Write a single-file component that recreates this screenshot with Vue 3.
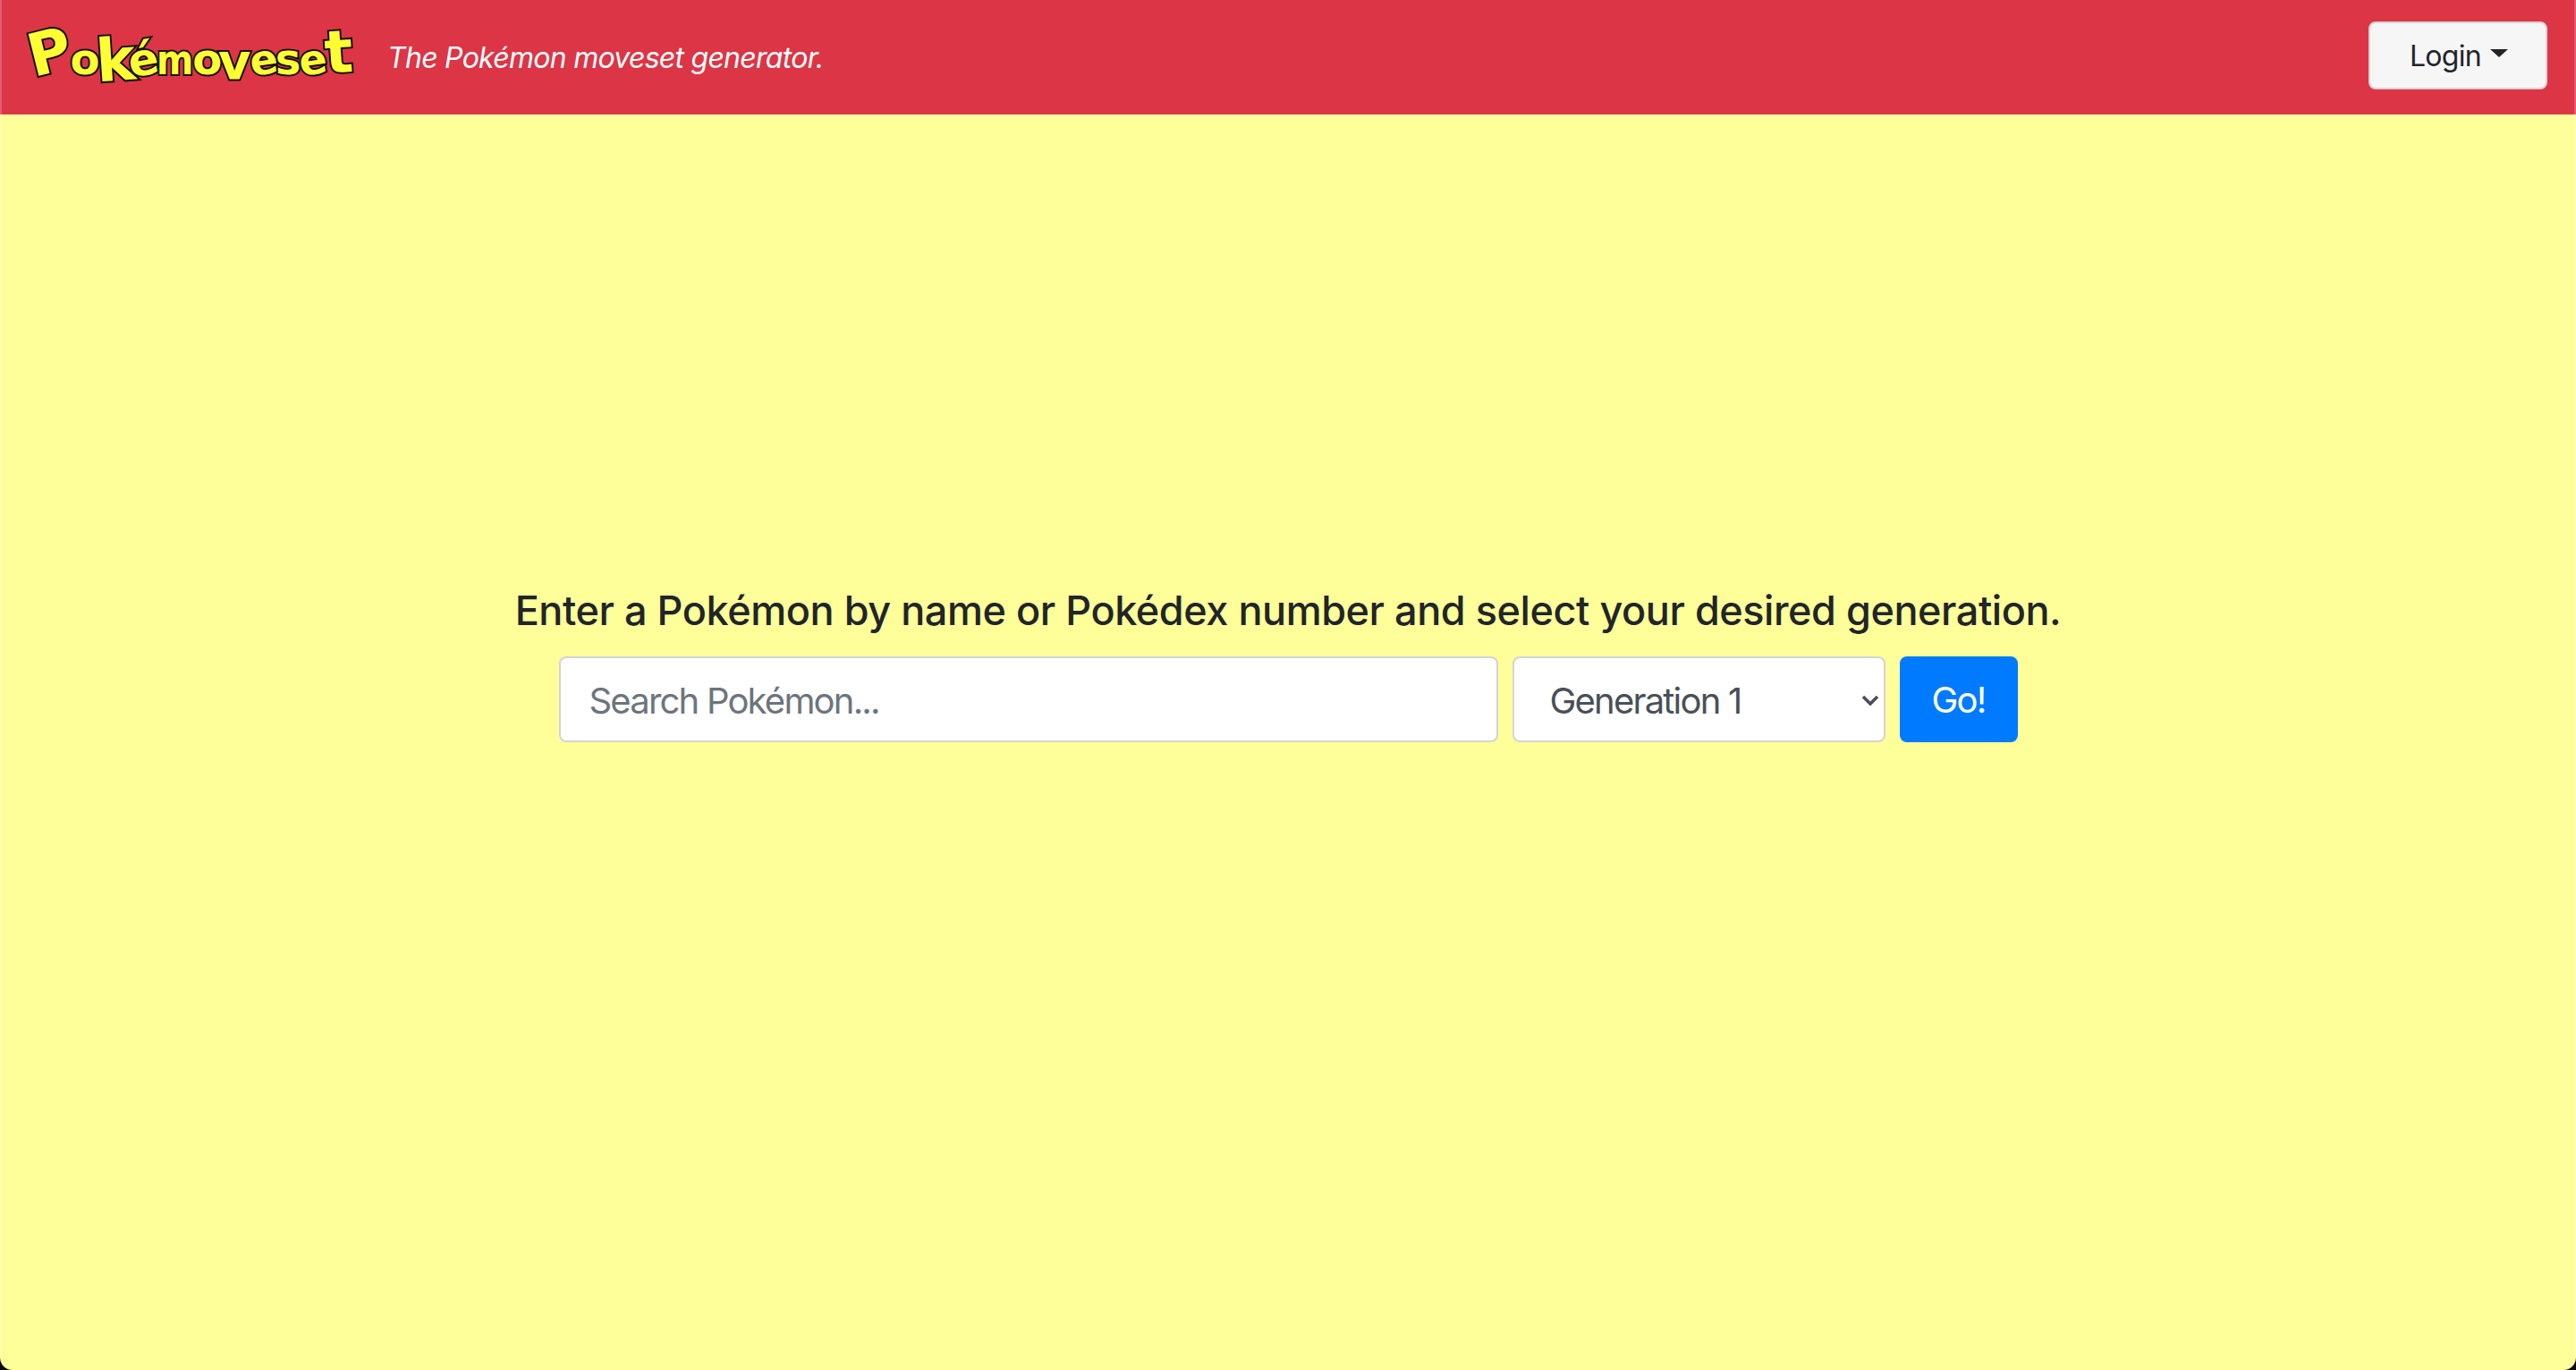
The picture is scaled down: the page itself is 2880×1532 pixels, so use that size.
<script setup>
import { ref } from 'vue'

const search = ref('')
const generation = ref(1)
const generations = [1, 2, 3, 4, 5, 6, 7, 8]
const logoLetters = [
  { ch: 'P', cls: 'l-p' },
  { ch: 'o', cls: 'l-o' },
  { ch: 'k', cls: 'l-k' },
  { ch: 'é', cls: 'l-e' },
  { ch: 'm', cls: 'l-m' },
  { ch: 'o', cls: 'l-o2' },
  { ch: 'v', cls: 'l-v' },
  { ch: 'e', cls: 'l-e2' },
  { ch: 's', cls: 'l-s' },
  { ch: 'e', cls: 'l-e3' },
  { ch: 't', cls: 'l-t' }
]
</script>

<template>
  <div class="page">
    <nav class="navbar">
      <div class="brand">
        <a class="logo" aria-label="Pokémoveset">
          <span v-for="(l, i) in logoLetters" :key="i" :class="['logo-letter', l.cls]">{{ l.ch }}</span>
        </a>
        <span class="tagline">The Pokémon moveset generator.</span>
      </div>
      <button class="login-btn" type="button">Login<span class="caret"></span></button>
    </nav>

    <main class="main">
      <h1 class="title">Enter a Pokémon by name or Pokédex number and select your desired generation.</h1>
      <form class="search-form" @submit.prevent>
        <input v-model="search" class="field search-input" type="text" placeholder="Search Pokémon..." />
        <div class="select-wrap">
          <select v-model="generation" class="field gen-select">
            <option v-for="g in generations" :key="g" :value="g">Generation {{ g }}</option>
          </select>
          <svg class="chevron" width="20" height="12" viewBox="0 0 20 12" aria-hidden="true">
            <path d="M2 2 L10 10 L18 2" fill="none" stroke="#495057" stroke-width="3.6" />
          </svg>
        </div>
        <button class="go-btn" type="submit">Go!</button>
      </form>
    </main>
  </div>
</template>

<style>
html,
body {
  margin: 0;
  background: #0c0c0c;
}
</style>

<style scoped>
.page {
  position: relative;
  height: 1532px;
  overflow: hidden;
  background: #ffff99;
  border-radius: 0 0 14px 14px;
  font-family: Inter, "Liberation Sans", sans-serif;
  color: #212529;
}

/* light window edge on both sides */
.page::after {
  content: "";
  position: absolute;
  top: 0;
  bottom: 0;
  left: 0;
  right: 0;
  border-left: 2px solid rgba(255, 255, 255, 0.2);
  border-right: 2px solid rgba(255, 255, 255, 0.2);
  border-radius: 0 0 14px 14px;
  pointer-events: none;
}

.navbar {
  height: 128px;
  background: #dc3545;
  display: flex;
  align-items: center;
  justify-content: space-between;
  padding: 0 32px 0 32px;
}

.brand {
  display: flex;
  align-items: center;
  gap: 33px;
}

.logo {
  display: flex;
  align-items: baseline;
  width: 368px;
  font-family: "DejaVu Sans", sans-serif;
  font-weight: 700;
  line-height: 70px;
  color: #ffff33;
  -webkit-text-stroke: 4px #111;
  paint-order: stroke fill;
}

.logo-letter {
  display: inline-block;
}

.l-p { font-size: 66px; transform: rotate(-14deg) translateY(-2px); margin-right: -2px; }
.l-o { font-size: 48px; margin-right: -4px; }
.l-k { font-size: 66px; transform: rotate(-4deg) translateY(7px); margin-right: -8px; }
.l-e { font-size: 50px; transform: rotate(-10deg) translateY(1px); margin-right: -2px; }
.l-m { font-size: 46px; transform: scaleX(0.86); transform-origin: left; margin-right: -8px; }
.l-o2 { font-size: 48px; margin-right: -4px; }
.l-v { font-size: 56px; transform: translateY(5px); margin-right: -2px; }
.l-e2 { font-size: 46px; margin-right: -2px; transform: rotate(-8deg); }
.l-s { font-size: 48px; margin-right: -2px; }
.l-e3 { font-size: 46px; margin-right: -3px; transform: rotate(-8deg); }
.l-t { font-size: 66px; transform: rotate(-4deg) translateY(-2px); }

.tagline {
  font-size: 32px;
  font-style: italic;
  letter-spacing: -0.73px;
  color: #fff;
  white-space: nowrap;
}

.login-btn {
  width: 200px;
  height: 76px;
  margin-bottom: 4px;
  background: #f6f6f7;
  border: 2px solid #d3d4d6;
  border-radius: 8px;
  font-family: inherit;
  font-size: 32px;
  letter-spacing: -0.7px;
  color: #212529;
  display: flex;
  align-items: center;
  justify-content: center;
  padding: 0 0 0 2px;
}

.caret {
  width: 0;
  height: 0;
  margin-left: 10px;
  margin-bottom: 6px;
  border-top: 9px solid #212529;
  border-left: 10px solid transparent;
  border-right: 10px solid transparent;
}

.main {
  display: flex;
  flex-direction: column;
  align-items: center;
  padding-top: 527px;
}

.title {
  margin: 0 0 23px;
  font-size: 45px;
  line-height: 56px;
  font-weight: 500;
  letter-spacing: -0.44px;
  color: #212529;
  white-space: nowrap;
}

.search-form {
  display: flex;
  align-items: stretch;
  gap: 16px;
}

.field {
  box-sizing: border-box;
  height: 96px;
  background: #fff;
  border: 2px solid #d3d4d6;
  border-radius: 8px;
  font-family: inherit;
  font-size: 40px;
  letter-spacing: -1.8px;
  color: #495057;
  outline: none;
}

.search-input {
  width: 1050px;
  padding: 2px 32px 0;
}

.search-input::placeholder {
  color: #6c757d;
  opacity: 1;
}

.select-wrap {
  position: relative;
}

.gen-select {
  width: 417px;
  padding: 2px 40px 0;
  appearance: none;
}

.chevron {
  position: absolute;
  right: 7px;
  top: 43px;
  pointer-events: none;
}

.go-btn {
  width: 132px;
  height: 96px;
  background: #007bff;
  border: 0;
  border-radius: 8px;
  font-family: inherit;
  font-size: 40px;
  letter-spacing: -1.8px;
  color: #fff;
  padding: 0;
}
</style>
